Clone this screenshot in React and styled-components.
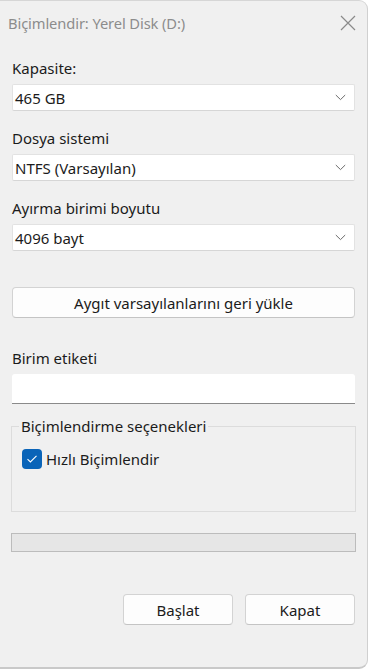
import React from "react";
import styled, { createGlobalStyle } from "styled-components";

const Global = createGlobalStyle`
  html, body { margin: 0; padding: 0; background: #ffffff; }
  body { font-family: "Noto Sans", "Open Sans", sans-serif; }
  * { box-sizing: border-box; }
`;

const Window = styled.div`
  width: 368px;
  height: 669px;
  background: #f0f0f0;
  border-top: 1px solid #d6d6d6;
  border-right: 1px solid #d0d0d0;
  border-bottom: 2px solid #c9c9c9;
  border-radius: 0 9px 9px 0;
  display: flex;
  flex-direction: column;
  color: #1b1b1b;
  font-size: 15px;
`;

const TitleBar = styled.div`
  height: 43px;
  display: flex;
  align-items: center;
  justify-content: space-between;
  padding: 0 11px 0 8px;
`;

const Title = styled.div`
  font-size: 14.7px;
  color: #8c8c8c;
  letter-spacing: -0.1px;
`;

const Body = styled.div`
  padding: 14px 12px 0 12px;
  display: flex;
  flex-direction: column;
`;

const Label = styled.div`
  font-size: 15px;
  line-height: 20px;
  margin-bottom: ${(p) => p.$mb ?? 6}px;
  margin-top: ${(p) => p.$mt ?? 0}px;
`;

const Select = styled.div`
  height: 27px;
  background: #ffffff;
  border: 1px solid #e2e2e2;
  border-bottom-color: #d6d6d6;
  border-radius: 2px;
  display: flex;
  align-items: center;
  justify-content: space-between;
  padding: 0 8px 0 2px;
  font-size: 15px;
`;

const Button = styled.div`
  height: 31px;
  background: #fdfdfd;
  border: 1px solid #d3d3d3;
  border-bottom-color: #c4c4c4;
  border-radius: 4px;
  display: flex;
  align-items: center;
  justify-content: center;
  font-size: 15px;
  width: ${(p) => p.$w || "auto"};
  margin-top: ${(p) => p.$mt ?? 0}px;
`;

const TextInput = styled.div`
  height: 30px;
  background: #ffffff;
  border-radius: 3px 3px 0 0;
  border-bottom: 1px solid #8a8a8a;
`;

const Group = styled.fieldset`
  margin: 13px -1px 0 -1px;
  padding: 0 10px 0 10px;
  height: 95px;
  border: 1px solid #dcdcdc;
  border-radius: 0;
`;

const Legend = styled.legend`
  padding: 0 2px;
  margin-left: -3px;
  font-size: 15px;
  line-height: 18px;
`;

const CheckRow = styled.div`
  display: flex;
  align-items: center;
  gap: 4px;
  margin-top: 14px;
  font-size: 15px;
`;

const Box = styled.div`
  width: 20px;
  height: 20px;
  border-radius: 4px;
  background: #0a64b8;
  display: flex;
  align-items: center;
  justify-content: center;
`;

const Progress = styled.div`
  margin: 21px -1px 0 -1px;
  height: 19px;
  background: #e6e6e6;
  border: 1px solid #bcbcbc;
`;

const Footer = styled.div`
  display: flex;
  justify-content: flex-end;
  gap: 12px;
  margin-top: 42px;
`;

const Chevron = () => (
  <svg width="11" height="7" viewBox="0 0 11 7">
    <path d="M0.8 1 L5.5 5.6 L10.2 1" fill="none" stroke="#6b6b6b" strokeWidth="1" />
  </svg>
);

const Close = () => (
  <svg width="16" height="16" viewBox="0 0 16 16">
    <path d="M1 1 L15 15 M15 1 L1 15" stroke="#8a8a8a" strokeWidth="1.2" />
  </svg>
);

export default function App() {
  return (
    <>
      <Global />
      <Window>
        <TitleBar>
          <Title>Biçimlendir: Yerel Disk (D:)</Title>
          <Close />
        </TitleBar>
        <Body>
          <Label>Kapasite:</Label>
          <Select>
            <span>465 GB</span>
            <Chevron />
          </Select>
          <Label $mt={17}>Dosya sistemi</Label>
          <Select>
            <span>NTFS (Varsayılan)</span>
            <Chevron />
          </Select>
          <Label $mt={17}>Ayırma birimi boyutu</Label>
          <Select>
            <span>4096 bayt</span>
            <Chevron />
          </Select>
          <Button $mt={36}>Aygıt varsayılanlarını geri yükle</Button>
          <Label $mt={30} $mb={6}>Birim etiketi</Label>
          <TextInput />
          <Group>
            <Legend>Biçimlendirme seçenekleri</Legend>
            <CheckRow>
              <Box>
                <svg width="12" height="10" viewBox="0 0 12 10">
                  <path d="M1.5 5.2 L4.4 8 L10.5 1.8" fill="none" stroke="#fff" strokeWidth="1.1" />
                </svg>
              </Box>
              <span>Hızlı Biçimlendir</span>
            </CheckRow>
          </Group>
          <Progress />
          <Footer>
            <Button $w="110px">Başlat</Button>
            <Button $w="110px">Kapat</Button>
          </Footer>
        </Body>
      </Window>
    </>
  );
}
